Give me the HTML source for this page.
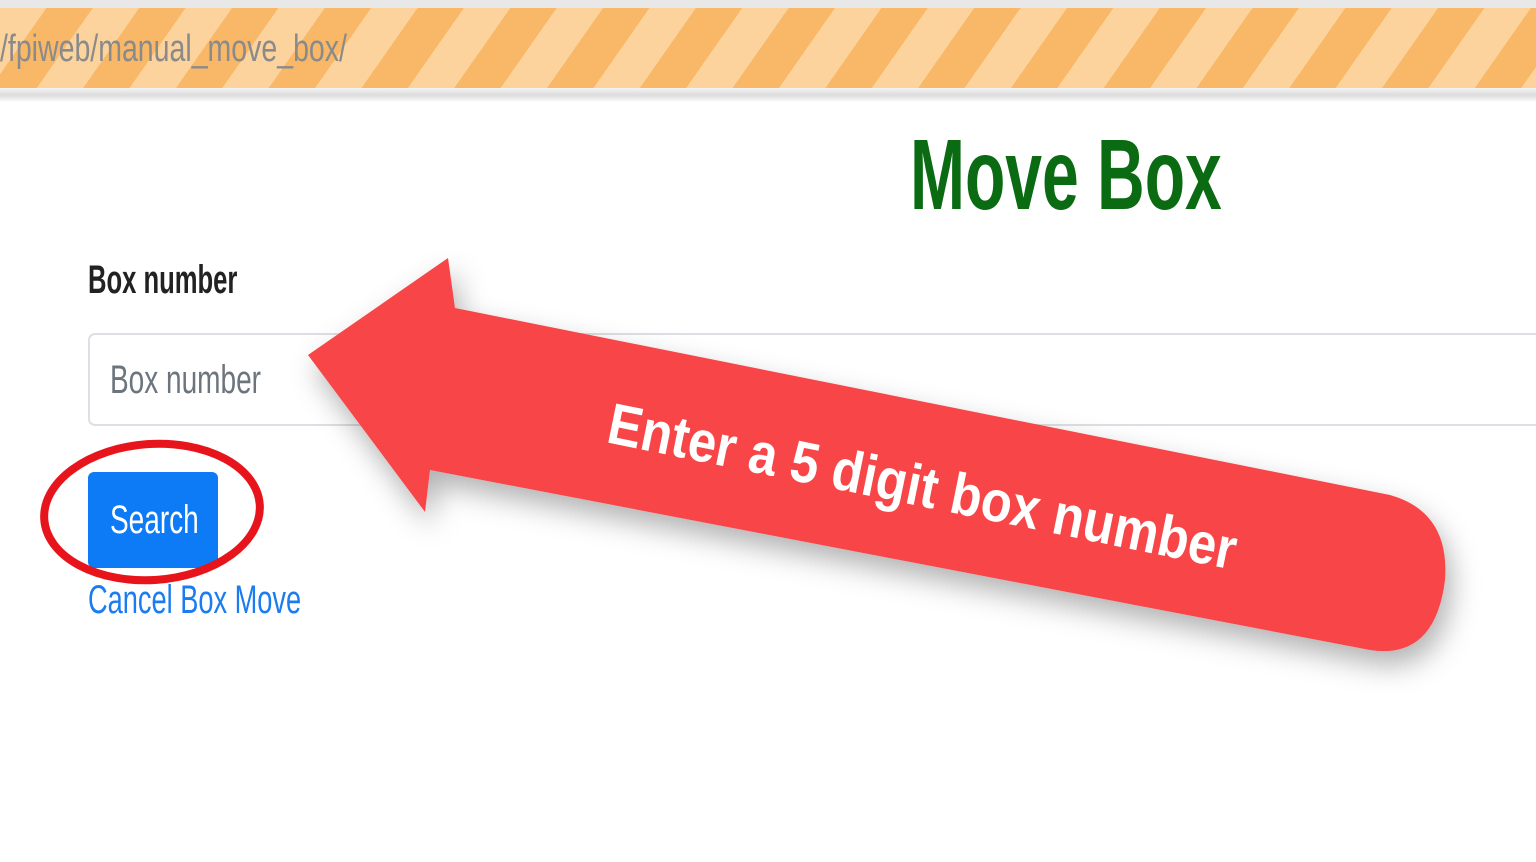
<!DOCTYPE html>
<html><head><meta charset="utf-8"><style>
html,body{margin:0;padding:0;width:1536px;height:862px;overflow:hidden;background:#fff;font-family:"Liberation Sans",sans-serif;}
.top{position:absolute;left:0;top:0;width:1536px;height:8px;background:#e8e8e8;}
.stripe{position:absolute;left:0;top:8px;width:1536px;height:80px;
background:repeating-linear-gradient(125deg,#fcd39c 0 38px,#f8b868 38px 76px);}
.line{position:absolute;left:0;top:88px;width:1536px;height:14px;background:linear-gradient(#f3f3f3,#dcdcdc 50%,#eee 80%,#fff);}
.c{position:absolute;white-space:nowrap;transform-origin:0 0;}
.url{left:0;top:28px;font-size:38px;color:#8a8a8a;transform:scaleX(.75);}
.title{left:910px;top:118px;font-size:100px;font-weight:bold;color:#0a6b12;transform:scaleX(.66);}
.label{left:88px;top:258px;font-size:40px;font-weight:bold;color:#222;transform:scaleX(.64);}
.input{position:absolute;left:88px;top:333px;width:1460px;height:93px;border:2px solid #dcdfe3;border-radius:7px;box-sizing:border-box;}
.ph{left:110px;top:358px;font-size:40px;color:#6c757d;transform:scaleX(.7);}
.btn{position:absolute;left:88px;top:472px;width:130px;height:96px;background:#0d7bf5;border-radius:6px;}
.bt{left:110px;top:498px;font-size:40px;color:#fff;transform:scaleX(.7);}
.cancel{left:88px;top:578px;font-size:40px;color:#1a7cf0;transform:scaleX(.68);}
svg{position:absolute;left:0;top:0;}
</style></head><body>
<div class="top"></div><div class="stripe"></div><div class="line"></div>
<div class="c url">/fpiweb/manual_move_box/</div>
<div class="c title">Move Box</div>
<div class="c label">Box number</div>
<div class="input"></div>
<div class="c ph">Box number</div>
<div class="btn"></div>
<div class="c bt">Search</div>
<div class="c cancel">Cancel Box Move</div>
<svg width="1536" height="862">
<defs><filter id="sh" x="-10%" y="-20%" width="130%" height="160%"><feDropShadow dx="6" dy="14" stdDeviation="14" flood-color="#000" flood-opacity=".3"/></filter></defs>
<path d="M308,355 L448,258 L455,308 L1390,495 Q1450,512 1445,580 Q1435,660 1370,650 L430,470 L425,512 Z" fill="#f84446" filter="url(#sh)"/>
<text x="605" y="442" transform="rotate(11.5 605 442)" font-family="Liberation Sans,sans-serif" font-weight="bold" font-size="58" fill="#fff" textLength="640" lengthAdjust="spacingAndGlyphs">Enter a 5 digit box number</text>
<ellipse cx="152" cy="512" rx="108" ry="68" fill="none" stroke="#e8141c" stroke-width="8" transform="rotate(-4 152 512)"/>
</svg>
</body></html>
